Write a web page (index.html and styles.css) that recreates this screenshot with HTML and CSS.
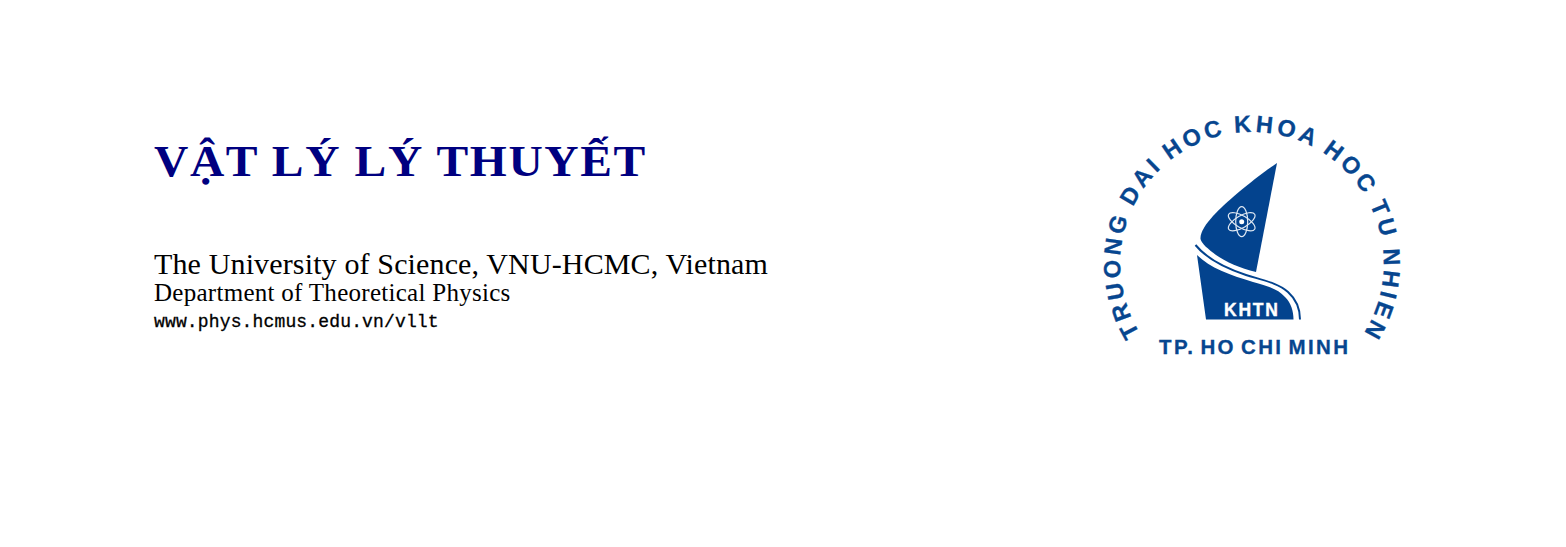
FILE: index.html
```html
<!DOCTYPE html>
<html lang="vi">
<head>
    <meta charset="UTF-8">
    <title>Vật Lý Lý Thuyết</title>
    <link rel="stylesheet" href="styles.css">
</head>
<body>
    <main class="trang">
        <section class="tieude">
            <h1>VẬT LÝ LÝ THUYẾT</h1>
            <p class="truong">The University of Science, VNU-HCMC, Vietnam</p>
            <p class="khoa">Department of Theoretical Physics</p>
            <p class="web">www.phys.hcmus.edu.vn/vllt</p>
        </section>
        <svg class="logo" viewBox="0 0 340 270" width="340" height="270" role="img" aria-label="Truong Dai Hoc Khoa Hoc Tu Nhien">
            <defs>
                <path id="vong" d="M60.300 233.500 A131.700 131.700 0 1 1 172 295.400"/>
            </defs>
            <text class="chu-vong">
                <textPath href="#vong">TRUONG DAI HOC KHOA HOC TU NHIEN</textPath>
            </text>
            <path class="xanh" d="M197 63 L176 172 C160 168 146 162 136 155 C128 149 122 144 120.500 139 C120 132 126 124 133 116 C146 102 172 80 197 63 Z"/>
            <path class="duong" d="M115.500 145 C126 158 145 168 166 175 C182 180 198 183 208 192 C217 200 220 209 220 219.500"/>
            <path class="xanh" d="M117 155 C130 168 150 175 173 182 C188 186 198 189 205 197 C211 203 213.500 211 213.500 219.500 L126 219.500 Z"/>
            <text class="chu-khtn" x="144" y="215.500" textLength="54" lengthAdjust="spacing">KHTN</text>
            <g class="nguyentu">
                <ellipse cx="161.700" cy="121.700" rx="15" ry="6" transform="rotate(30 161.700 121.700)"/>
                <ellipse cx="161.700" cy="121.700" rx="15" ry="6" transform="rotate(90 161.700 121.700)"/>
                <ellipse cx="161.700" cy="121.700" rx="15" ry="6" transform="rotate(150 161.700 121.700)"/>
                <circle cx="161.700" cy="121.700" r="2.500"/>
            </g>
            <text class="chu-tp" x="79" y="254" textLength="189" lengthAdjust="spacing">TP. HO CHI MINH</text>
        </svg>
    </main>
</body>
</html>
```

FILE: styles.css
```css
body {
    margin: 0;
    background: #fff;
    color: #000;
}
.trang {
    display: flex;
    justify-content: space-between;
    align-items: flex-start;
    height: 547px;
    padding: 100px 146px 0 154px;
    box-sizing: border-box;
}
.tieude {
    padding-top: 32px;
    font-family: "Liberation Serif", serif;
}
h1 {
    margin: 0 0 55px;
    color: #000080;
    font-size: 44px;
    line-height: 60px;
    font-weight: bold;
    letter-spacing: 1.5px;
    white-space: nowrap;
    transform: scaleX(1.08);
    transform-origin: left center;
}
.tieude p {
    margin: 0;
    white-space: nowrap;
}
.truong {
    font-size: 30px;
    line-height: 34px;
    letter-spacing: 0.14px;
}
.tieude .khoa {
    margin-top: -1px;
    font-size: 25px;
    line-height: 26px;
    letter-spacing: 0.28px;
}
.tieude .web {
    margin-top: 2px;
    font-family: "Liberation Mono", monospace;
    font-size: 18px;
    line-height: 28px;
    letter-spacing: 0.15px;
    -webkit-text-stroke: 0.3px #000;
}
.logo {
    flex: none;
}
.chu-vong, .chu-tp {
    fill: #07468f;
    stroke: #07468f;
    stroke-width: 0.3;
    font-family: "Liberation Sans", sans-serif;
    font-weight: bold;
}
.chu-vong {
    font-size: 23.5px;
    letter-spacing: 3.65px;
    word-spacing: -2px;
}
.chu-tp {
    font-size: 20.5px;
    word-spacing: -3px;
}
.xanh {
    fill: #03438e;
}
.duong {
    fill: none;
    stroke: #03438e;
    stroke-width: 2;
}
.chu-khtn {
    fill: #fff;
    stroke: #fff;
    stroke-width: 0.4;
    font-family: "Liberation Sans", sans-serif;
    font-weight: bold;
    font-size: 17.5px;
}
.nguyentu ellipse {
    fill: none;
    stroke: #dfe8f3;
    stroke-width: 1.2;
}
.nguyentu circle {
    fill: #fff;
}
```
